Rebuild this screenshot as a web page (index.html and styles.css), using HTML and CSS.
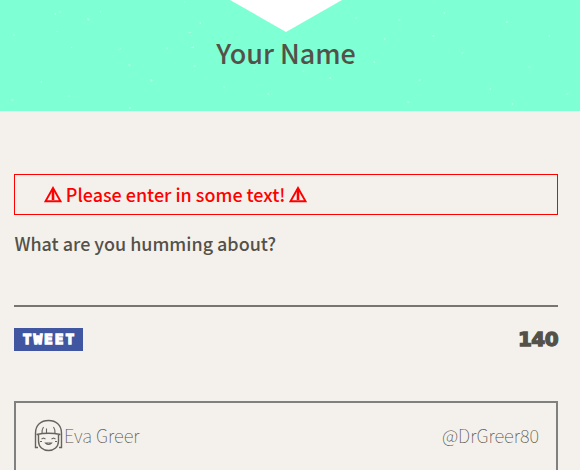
FILE: index.html
```html
<!DOCTYPE html>
<html lang="en">
<head>
<meta charset="utf-8">
<title>Tweeter</title>
<link rel="stylesheet" href="styles.css">
</head>
<body>
<header class="profile">
  <svg class="texture" width="580" height="111" aria-hidden="true">
    <g fill="#fff" fill-opacity=".38">
      <path d="M54 14l2-1v2zM59 11l2 1-1 1zM87 18l3 1-2 2zM56 32l2-1v1zM13 34l2 1-1 1zM71 47l2 1h-2zM118 50l3-2v1zM128 64l3 1-2 1zM166 47l2 1-1 2zM190 48l4-2v2zM187 32h4v1zM184 1l2 2-2-1zM150 79l3 1-2 2zM193 66l3-1-1 2zM129 107l3 1-3 1zM68 95l2 1-1 1zM40 82l2-1v2zM11 99l3 1-2 1zM101 11l-1 2v-2zM199 23l2-1v2zM253 68l3-1-2 2zM267 94l2-1v2zM223 86l2 1-1 1zM302 71l3-1-2 2zM329 78l2-1v2zM355 18l3-1-2 2zM373 62l2-1v2zM398 19l3 1-2 1zM418 80l3-1-1 2zM443 13l2-1v2zM461 53l3-1-2 2zM489 89l2-1v2zM506 21l3 1-3 1zM528 67l3-1-2 2zM548 36l2-1v2zM566 94l3-1-2 2zM407 101l3 1-2 1zM511 104l2-1v2zM384 38l2 1-2 1zM432 35l3 1-2 1z"/>
    </g>
  </svg>
  <div class="arrow"></div>
  <h2 class="name">Your Name</h2>
</header>
<main class="container">
  <section class="new-tweet">
    <p class="error"><svg class="warn" viewBox="0 0 18 17"><path d="M9 2L1.500 15.200h15z"/><path class="mark" d="M9 3v11"/></svg><span class="error-text">Please enter in some text!</span><svg class="warn" viewBox="0 0 18 17"><path d="M9 2L1.500 15.200h15z"/><path class="mark" d="M9 3v11"/></svg></p>
    <form>
      <label class="prompt" for="tweet-text">What are you humming about?</label>
      <textarea id="tweet-text"></textarea>
      <div class="actions">
        <button type="button"><span class="tweet-label">TWEET</span></button>
        <output class="counter">140</output>
      </div>
    </form>
  </section>
  <article class="tweet">
    <div class="user">
      <svg class="avatar" viewBox="0 0 29 33">
        <path d="M4 28.500H1.500V14C1.500 6 7 1.500 14.500 1.500S27.500 6 27.500 14v14.500H25"/>
        <path d="M4.500 15v7c0 6 4.500 9.500 10 9.500s10-3.500 10-9.500v-7M2.500 15.500q12-2.500 24 0"/>
        <path class="fine" d="M9.500 8q-2 3-1.500 6.500M12.500 9.500v4.500M19.500 8q2 3 1.500 6.500M7.500 20l2-1 2 1M17.500 20l2-1 2 1M11.500 24q3 3 6 0zM6 22.500h2M21 22.500h2"/>
      </svg>
      <span class="fullname">Eva Greer</span>
    </div>
    <span class="handle">@DrGreer80</span>
  </article>
</main>
</body>
</html>
```
FILE: styles.css
```css
* { box-sizing: border-box; }
body {
  margin: 0;
  height: 470px;
  overflow: hidden;
  background: #f4f1ec;
  color: #545149;
  font-family: "Noto Sans CJK SC", "Noto Sans", sans-serif;
}
.profile {
  position: relative;
  height: 111px;
  padding-right: 8px;
  background: #7fffd4;
  display: flex;
  flex-direction: column;
  align-items: center;
}
.texture { position: absolute; top: 0; left: 0; }
.arrow {
  width: 112px;
  height: 32px;
  background: #fff;
  clip-path: polygon(0 0, 100% 0, 50% 100%);
}
.name {
  margin: 1px 0 0;
  font-size: 26.900px;
  line-height: 40px;
  font-weight: 500;
  white-space: nowrap;
}
.container { padding: 63px 22px 0 14px; }
.error {
  margin: 0;
  height: 41px;
  padding-left: 29px;
  border: 1px solid #f00;
  color: #f00;
  display: flex;
  align-items: center;
  gap: 3.800px;
  font-size: 17.950px;
  font-weight: 500;
  white-space: nowrap;
}
.error-text { line-height: 26px; padding-bottom: 2px; }
.warn { width: 18px; height: 17px; fill: none; stroke: #f00; stroke-width: 1.900; }
.mark { stroke-width: 2.600; }
.prompt {
  display: block;
  margin: 15px 0 1px;
  padding-left: .4px;
  font-size: 17.950px;
  line-height: 26px;
  font-weight: 500;
}
textarea {
  display: block;
  width: 100%;
  height: 50px;
  padding: 0;
  border: 0;
  border-bottom: 2px solid #787570;
  background: transparent;
  resize: none;
}
.actions {
  margin-top: 21px;
  height: 23px;
  display: flex;
  justify-content: space-between;
  align-items: center;
}
button {
  width: 69px;
  height: 23px;
  padding: 0;
  border: 0;
  background: #4056a1;
  color: #fff;
  display: flex;
  align-items: center;
  justify-content: center;
}
.tweet-label {
  font: 700 14.500px/23px "DejaVu Sans Mono", monospace;
  letter-spacing: 1.900px;
  margin-right: -1.900px;
  -webkit-text-stroke: 1.300px #fff;
}
.counter {
  font: 700 20px/23px "DejaVu Sans", sans-serif;
  letter-spacing: -.6px;
  -webkit-text-stroke: 1.300px #545149;
}
.tweet {
  margin-top: 50px;
  height: 69px;
  padding: 16px 17px 0 18px;
  border: 2px solid #808080;
  border-bottom: 0;
  display: flex;
  justify-content: space-between;
  align-items: flex-start;
  font-size: 18.300px;
  line-height: 32px;
  font-weight: 100;
}
.user { display: flex; align-items: flex-start; gap: 1px; }
.avatar { width: 29px; height: 33px; fill: none; stroke: #66635d; stroke-width: 1.400; }
.fine { stroke-width: 1.100; }
```
